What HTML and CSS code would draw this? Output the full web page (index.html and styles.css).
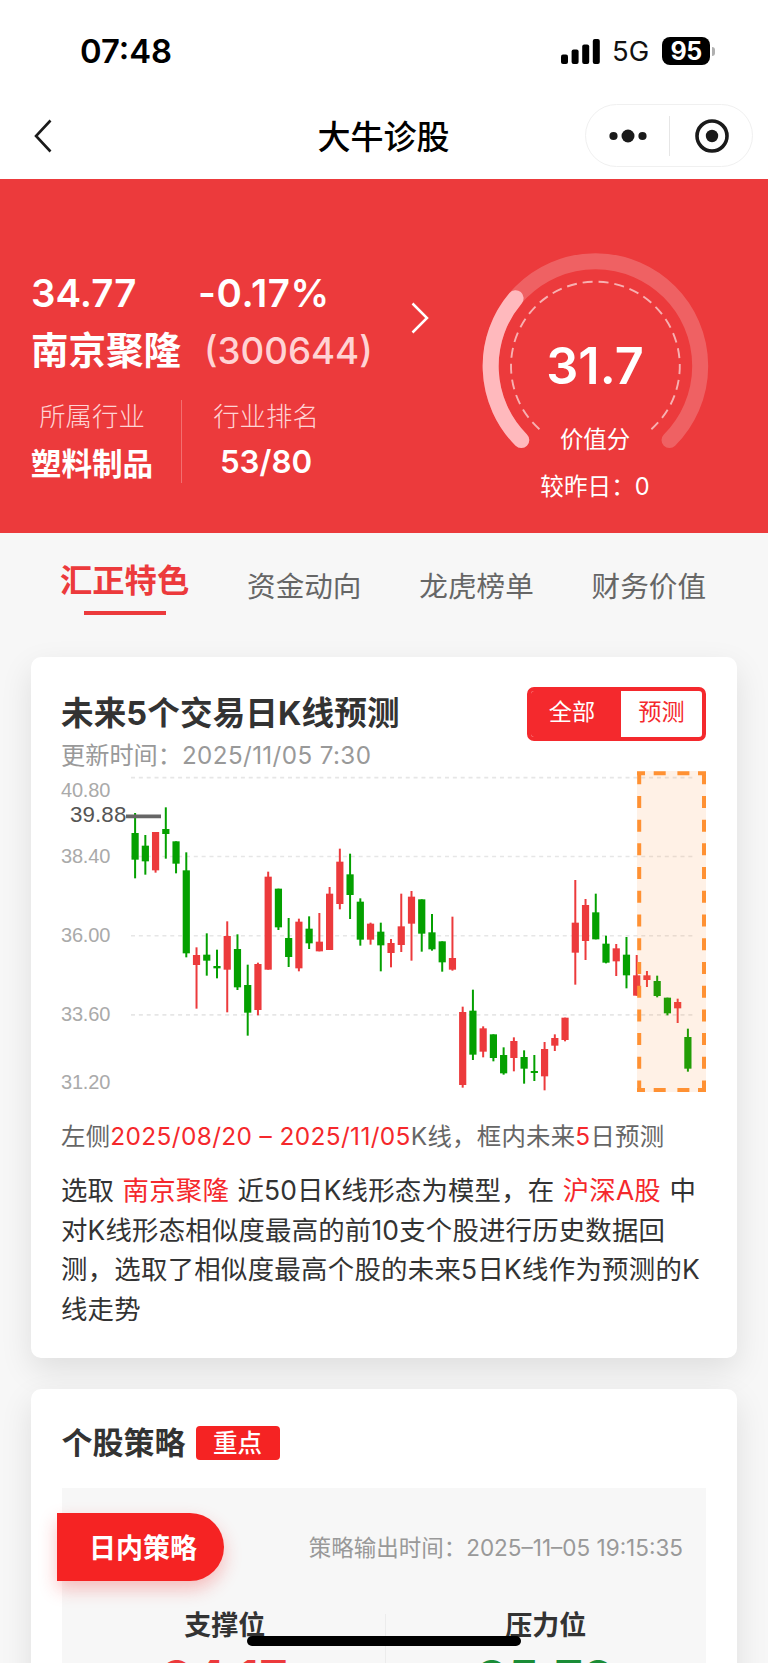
FILE: index.html
```html
<!DOCTYPE html>
<html lang="zh-CN">
<head>
<meta charset="utf-8">
<title>大牛诊股</title>
<link rel="stylesheet" href="styles.css">
</head>
<body>
<div class="screen">
  <header class="top">
    <div class="status">
      <span class="clock">07:48</span>
      <div class="status-icons">
        <svg class="signal" viewBox="0 0 40 25"><rect x="0" y="15.5" width="7" height="9.5" rx="2"/><rect x="10.6" y="10.5" width="7" height="14.5" rx="2"/><rect x="21.2" y="5.5" width="7" height="19.5" rx="2"/><rect x="31.8" y="0" width="7" height="25" rx="2"/></svg>
        <span class="net">5G</span>
        <span class="battery"><b>95</b></span>
        <span class="nub"></span>
      </div>
    </div>
    <div class="nav">
      <svg class="back" viewBox="0 0 20 34"><path d="M17.5 1.5 3 17 17.5 32.5" fill="none" stroke="#1a1a1a" stroke-width="2.6"/></svg>
      <h1 class="nav-title">大牛诊股</h1>
      <div class="capsule">
        <svg class="dots" viewBox="0 0 38 14"><circle cx="4.5" cy="7" r="4.1"/><circle cx="19" cy="7" r="6.5"/><circle cx="33.5" cy="7" r="4.1"/></svg>
        <i class="capsule-line"></i>
        <svg class="target" viewBox="0 0 34 34"><circle cx="17" cy="17" r="15" fill="none" stroke="#1a1a1a" stroke-width="3.6"/><circle cx="17" cy="17" r="6.2"/></svg>
      </div>
    </div>
  </header>

  <section class="hero">
    <div class="stock">
      <div class="quote"><span class="price">34.77</span><span class="change">-0.17%</span></div>
      <div class="name-row"><span class="name">南京聚隆</span><span class="code">(300644)</span></div>
      <div class="facts">
        <div class="fact fact-a"><span class="fact-label">所属行业</span><span class="fact-cn">塑料制品</span></div>
        <div class="fact fact-b"><span class="fact-label">行业排名</span><span class="fact-num">53/80</span></div>
      </div>
    </div>
    <svg class="go" viewBox="0 0 18 32"><path d="M1.5 1.5 16 16 1.5 30.5" fill="none" stroke="#fff" stroke-width="2.5"/></svg>
    <div class="gauge">
      <svg class="gauge-svg" viewBox="0 0 228 200" fill="none">
        <path d="M40.3 188.1A104.8 104.8 0 1 1 188.5 188.1" stroke="#fff" stroke-opacity=".2" stroke-width="16" stroke-linecap="round"/>
        <path d="M40.3 188.1A104.8 104.8 0 0 1 34.6 46.2" stroke="#ffb9bd" stroke-width="16" stroke-linecap="round"/>
        <path d="M58.4 177.2A84.4 84.4 0 1 1 170.4 177.2" stroke="#fff" stroke-opacity=".6" stroke-width="1.9" stroke-dasharray="10 5.9"/>
      </svg>
      <div class="score">31.7</div>
      <div class="score-label">价值分</div>
      <div class="score-diff">较昨日：<span>0</span></div>
    </div>
  </section>

  <nav class="tabs">
    <a class="tab active">汇正特色</a><a class="tab">资金动向</a><a class="tab">龙虎榜单</a><a class="tab">财务价值</a>
  </nav>

  <section class="card forecast">
    <div class="card-head">
      <div>
        <h2 class="card-title">未来5个交易日K线预测</h2>
        <p class="updated">更新时间：<span>2025/11/05 7:30</span></p>
      </div>
      <div class="toggle"><span class="on">全部</span><span class="off">预测</span></div>
    </div>
    <svg class="chart" id="chart" viewBox="31 768 706 340"></svg>
    <p class="legend">左侧<em class="range">2025/08/20 – 2025/11/05</em>K线，框内未来<em>5</em>日预测</p>
    <div class="desc">
      <p>选取 <em>南京聚隆</em> 近50日K线形态为模型，在 <em>沪深A股</em> 中</p>
      <p>对K线形态相似度最高的前10支个股进行历史数据回</p>
      <p>测，选取了相似度最高个股的未来5日K线作为预测的K</p>
      <p>线走势</p>
    </div>
  </section>

  <section class="card strategy">
    <div class="strategy-head"><h2 class="strategy-title">个股策略</h2><span class="badge">重点</span></div>
    <div class="panel">
      <div class="panel-head"><span class="tag">日内策略</span><span class="out-time">策略输出时间：<span>2025–11–05 19:15:35</span></span></div>
      <div class="levels">
        <div class="level"><span class="level-name">支撑位</span><span class="level-num up">34.17</span></div>
        <div class="level"><span class="level-name">压力位</span><span class="level-num down">35.79</span></div>
      </div>
    </div>
  </section>
  <div class="home-bar"></div>
</div>
<script src="chart.js"></script>
</body>
</html>
```
FILE: styles.css
```css
* { box-sizing: border-box; margin: 0; padding: 0; }
body { background: #f7f7f7; font-family: Inter, "Noto Sans CJK SC", sans-serif; color: #333; }
em { font-style: normal; color: #f5282c; }
span, p, h1, h2 { white-space: nowrap; }
.screen { position: relative; width: 768px; height: 1663px; overflow: hidden; }

.top { height: 179px; background: #fff; }
.status { height: 104px; padding: 0 53px 2px 80px; display: flex; justify-content: space-between; align-items: center; }
.clock { font-size: 32.8px; font-weight: 600; color: #000; }
.status-icons { display: flex; align-items: center; }
.signal { width: 40px; height: 25px; margin-right: 11px; }
.net { font-size: 27.4px; width: 38px; color: #111; }
.battery { width: 48px; height: 28px; margin-left: 12px; border-radius: 8px; background: #000; color: #fff; display: flex; align-items: center; justify-content: center; }
.battery b { font-size: 25px; font-weight: 700; letter-spacing: -.5px; }
.nub { width: 3px; height: 9px; margin-left: 2px; border-radius: 0 3px 3px 0; background: #b0b0b0; }
.nav { height: 63px; padding: 0 15px 0 33px; display: grid; grid-template-columns: 1fr 132px 1fr; align-items: center; }
.back { width: 20px; height: 34px; }
.nav-title { justify-self: center; font-size: 33px; line-height: 40px; margin: 3px 19px 0 0; font-weight: 500; color: #000; }
.capsule { justify-self: end; width: 168px; height: 63px; border: 1px solid #f0f0f0; border-radius: 32px; display: flex; align-items: center; padding-left: 23px; }
.dots { width: 38px; height: 14px; fill: #1a1a1a; }
.capsule-line { width: 1px; height: 40px; margin: 0 25px 0 22px; background: #e6e6e6; }
.target { width: 34px; height: 34px; fill: #1a1a1a; }

.hero { height: 353.5px; background: #ec3a3c; color: #fff; display: flex; align-items: flex-start; }
.stock { width: 411px; padding: 90px 0 0 31px; }
.quote { display: flex; height: 49px; line-height: 48px; font-size: 38.5px; font-weight: 600; }
.price { width: 167px; }
.change { letter-spacing: .6px; }
.name-row { display: flex; height: 66px; line-height: 66px; align-items: center; }
.name { width: 173px; font-size: 37.5px; font-weight: 700; }
.code { font-size: 36.7px; font-weight: 500; color: #ffd3d4; }
.facts { display: flex; margin-top: 16px; height: 83px; }
.fact { display: flex; flex-direction: column; align-items: center; }
.fact-a { width: 151px; padding-right: 28px; border-right: 1px solid #f36f70; }
.fact-b { width: 168px; }
.fact-label { font-size: 26.4px; line-height: 33px; font-weight: 300; color: #ffd3d4; }
.fact-cn { font-size: 30.6px; line-height: 61px; font-weight: 700; }
.fact-num { font-size: 31.3px; line-height: 58px; font-weight: 600; }
.go { width: 18px; height: 32px; margin-top: 123px; }
.gauge { width: 228px; margin: 73px 0 0 52px; display: flex; flex-direction: column; align-items: center; }
.gauge-svg { width: 228px; height: 200px; margin-bottom: -200px; }
.score { margin-top: 82px; height: 64px; line-height: 64px; font-size: 50.4px; font-weight: 600; }
.score-label { margin-top: 25px; height: 34px; line-height: 34px; font-size: 23.4px; }
.score-diff { margin-top: 13px; height: 34px; line-height: 34px; font-size: 23.6px; }

.tabs { height: 124.5px; padding: 32px 62px 0 60px; display: flex; justify-content: space-between; }
.tab { height: 52px; line-height: 43px; font-size: 28.6px; color: #666; }
.tab.active { font-size: 32.3px; line-height: 32px; font-weight: 700; color: #ec3a3c; display: flex; flex-direction: column; align-items: center; }
.tab.active::after { content: ""; width: 82px; height: 4.5px; margin-top: 14px; background: #ec3a3c; }

.card { margin: 0 31px; background: #fff; border-radius: 10px; box-shadow: 0 12px 32px rgba(0, 0, 0, .1); }
.forecast { height: 701px; }
.card-head { height: 111px; padding: 30px 31px 0 30px; display: flex; justify-content: space-between; }
.card-title { font-size: 32.6px; line-height: 53px; font-weight: 700; letter-spacing: .1px; }
.updated { font-size: 24.2px; line-height: 31px; color: #999; }
.updated span { letter-spacing: .4px; }
.toggle { width: 179px; height: 54px; border: 4px solid #f4292d; border-radius: 7px; overflow: hidden; display: flex; font-size: 23.2px; line-height: 42px; text-align: center; }
.on { width: 90px; padding-right: 8px; color: #fff; background: #f4292d; }
.off { flex: 1; color: #f4292d; }
.chart { display: block; width: 706px; height: 340px; }
.axis { font: 20px "Liberation Sans", sans-serif; fill: #aaa; }
.peak { font: 22.3px "Liberation Sans", sans-serif; fill: #555; }
.legend { margin: 11px 31px 0 30px; font-size: 24.4px; line-height: 34px; color: #666; letter-spacing: .25px; }
.range { letter-spacing: .38px; }
.desc { margin: 18px 20px 0 30px; font-size: 26.4px; line-height: 39.5px; letter-spacing: .2px; }
.desc p:first-child { word-spacing: .8px; }
.desc p:nth-child(3) { letter-spacing: .28px; }

.strategy { margin-top: 31px; height: 320px; padding: 37px 31px 0; }
.strategy-head { display: flex; height: 34px; align-items: center; }
.strategy-title { font-size: 31px; line-height: 40px; font-weight: 700; width: 134.5px; margin: 0 0 0 -.5px; }
.badge { width: 84px; height: 34px; border-radius: 4px; background: #f52323; color: #fff; font-size: 24.5px; line-height: 34px; text-align: center; font-weight: 500; padding-right: 1px; }
.panel { margin-top: 28px; height: 220px; padding-top: 25px; background: #f7f7f7; }
.panel-head { display: flex; justify-content: space-between; align-items: center; padding-right: 23px; }
.tag { width: 167px; height: 68px; margin-left: -5px; padding-left: 32px; border-radius: 0 34px 34px 0; background: #f52323; color: #fff; font-size: 27px; line-height: 71px; font-weight: 700; box-shadow: 0 8px 18px rgba(245, 35, 35, .28); }
.out-time { font-size: 22.5px; color: #999; margin-top: -2px; }
.levels { margin-top: 33px; padding-left: 3px; display: grid; grid-template-columns: 1fr 1fr; }
.level { display: flex; flex-direction: column; align-items: center; height: 90px; }
.level:first-child { border-right: 1px solid #ececec; }
.level-name { font-size: 27px; line-height: 24px; font-weight: 600; }
.level-num { margin-top: 10px; font-size: 48px; line-height: 60px; font-weight: 700; letter-spacing: 1px; }
.up { color: #ec3a3c; }
.down { color: #1a8c36; }
.home-bar { position: absolute; left: 247px; top: 1636px; width: 274px; height: 10px; border-radius: 5px; background: #000; }
```
FILE: chart.js
```js
// Each candle: colour, high, body top, body bottom, low (thirds of a pixel from y = 760).
const candles = `g 159 219 299 355|g 225 257 304 344|r 216 216 331 338|g 142 207 222 296|g 244 244 311 340
g 277 331 580 592|r 562 585 615 746|g 520 584 602 647|g 569 618 625 655|r 484 528 629 757
g 523 567 682 690|g 614 675 758 827|r 608 612 750 766|r 335 350 629 629|g 386 386 502 510
g 474 534 591 621|r 476 485 625 634|g 469 506 550 567|r 459 545 574 574|r 381 401 570 570
r 266 305 432 448|g 281 343 405 477|g 415 425 539 557|r 488 491 539 554|g 488 515 556 634
r 537 549 579 622|r 401 499 555 576|r 393 410 491 602|g 418 418 521 575|g 462 517 568 572
g 544 544 607 635|r 470 594 629 632|r 740 756 975 983|g 689 752 884 900|r 799 805 875 892
g 823 823 894 904|g 862 885 940 944|r 832 843 894 934|g 871 891 926 971|g 885 933 939 963
r 846 867 949 991|r 823 834 857 873|r 773 773 840 844|r 360 488 578 674|r 417 435 543 600
g 401 457 538 538|g 527 551 608 610|r 552 565 604 648|g 531 584 646 685|r 585 646 707 707
r 633 646 660 681|g 647 663 708 712|g 713 713 760 766|r 716 726 745 789|g 806 831 926 935`.split(/[|\n]/);
let out = '';
for (const y of [777.6, 856.5, 935.7, 1014.9]) {
  out += `<path d="M131 ${y}H693" stroke="#e6e6e6" stroke-width="1.6" stroke-dasharray="4 3.85"/>`;
}
candles.forEach((c, i) => {
  const p = c.split(' ');
  const [h, t, b, l] = p.slice(1).map(v => 760 + v / 3);
  const x = 135.1 + i * 10.237;
  const color = p[0] === 'g' ? '#04a000' : '#ec3a3c';
  out += `<path d="M${x} ${h}V${l}" stroke="${color}" stroke-width="2"/><rect x="${x - 3.6}" y="${t}" width="7.2" height="${b - t}" fill="${color}"/>`;
});
[['40.80', 796.7], ['38.40', 862.7], ['36.00', 941.7], ['33.60', 1021.4], ['31.20', 1088.7]].forEach(([s, y]) => {
  out += `<text class="axis" x="61" y="${y}" textLength="49.3">${s}</text>`;
});
out += '<path d="M126 816.4H161" stroke="#666" stroke-width="3.6"/><text class="peak" x="70" y="821.5" textLength="56.3">39.88</text>';
out += '<rect x="637" y="771" width="69" height="321" fill="#ff8c30" fill-opacity=".12"/>';
out += '<g stroke="#ff9133" stroke-width="4" stroke-dasharray="12 11.72">';
for (const x of [639.2, 704]) out += `<path d="M${x} 772.2V1092"/>`;
for (const y of [773.3, 1090]) out += `<path d="M637 ${y}H645M653.7 ${y}h12M677.4 ${y}h12M698 ${y}H706" stroke-dasharray="none"/>`;
out += '</g>';
document.getElementById('chart').innerHTML = out;
```
